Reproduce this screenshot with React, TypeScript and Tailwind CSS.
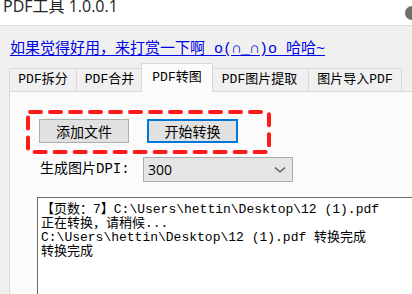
import React from "react";

const cjk = '"Noto Sans CJK SC", sans-serif';
const sim = '"Liberation Mono", "Noto Sans CJK SC", monospace';

function Tab({ label, w, selected }: { label: string; w: string; selected?: boolean }) {
  if (selected) {
    return (
      <div
        className={`${w} h-[29px] -mb-px -mx-[2px] relative z-10 bg-[#fbfbfb] border-t border-l border-r border-[#d9d9d9] flex items-start justify-center pt-[4px] text-[13px] text-black`}
        style={{ fontFamily: sim }}
      >
        {label}
      </div>
    );
  }
  return (
    <div
      className={`${w} h-[23px] bg-[#f0f0f0] border-t border-r border-[#d9d9d9] first:border-l flex items-center justify-center text-[13px] text-black`}
      style={{ fontFamily: sim }}
    >
      {label}
    </div>
  );
}

export default function App() {
  return (
    <div className="w-[412px] h-[294px] overflow-hidden bg-[#f0f0f0] relative">
      {/* title bar */}
      <div className="h-[26px] bg-white border-b border-[#dcdcdc] overflow-hidden relative">
        <div
          className="pl-[3px] -mt-[4px] text-[16px] leading-[20px] text-[#222]"
          style={{ fontFamily: '"Open Sans", "Noto Sans CJK SC", sans-serif' }}
        >
          PDF工具 1.0.0.1
        </div>
        <div className="absolute left-[405px] top-[6px] w-[14px] h-[14px] rounded-full bg-[#6e6e6e]" />
      </div>

      {/* link */}
      <div className="pl-[10px] pt-[9px] h-[36px]">
        <span
          className="text-[15px] leading-[18px] text-[#0000e6] underline underline-offset-2"
          style={{ fontFamily: '"Liberation Mono", "Noto Sans CJK SC", monospace' }}
        >
          如果觉得好用，来打赏一下啊 o(∩_∩)o 哈哈~
        </span>
      </div>

      {/* tabs */}
      <div className="flex items-end h-[29px] pl-[9px] relative">
        <Tab label="PDF拆分" w="w-[68px]" />
        <Tab label="PDF合并" w="w-[66px]" />
        <Tab label="PDF转图" w="w-[72px]" selected />
        <Tab label="PDF图片提取" w="w-[98px]" />
        <Tab label="图片导入PDF" w="w-[93px]" />
      </div>

      {/* panel */}
      <div className="ml-[9px] h-[220px] bg-[#fbfbfb] border-t border-l border-[#d9d9d9] relative">
        <div className="pl-[29px] pt-[27px] flex gap-[18px]">
          <div
            className="w-[90px] h-[24px] bg-[#e1e1e1] border border-[#adadad] flex items-center justify-center text-[14px] text-black"
            style={{ fontFamily: cjk }}
          >
            添加文件
          </div>
          <div
            className="w-[91px] h-[24px] bg-[#e1e1e1] border-2 border-[#0078d7] flex items-center justify-center text-[14px] text-black"
            style={{ fontFamily: cjk }}
          >
            开始转换
          </div>
        </div>

        <div className="pl-[30px] pt-[14px] flex items-center">
          <div className="w-[103px] text-[14px] text-black" style={{ fontFamily: sim }}>
            生成图片DPI:
          </div>
          <div className="w-[150px] h-[25px] bg-[#e5e5e5] border border-[#acacac] flex items-center justify-between pl-[4px] pr-[6px]">
            <span className="text-[14px] text-black" style={{ fontFamily: '"Open Sans", sans-serif' }}>
              300
            </span>
            <svg width="12" height="8" viewBox="0 0 12 8">
              <path d="M1 1.5 L6 6 L11 1.5" fill="none" stroke="#555" strokeWidth="1.3" />
            </svg>
          </div>
        </div>

        <div className="ml-[27px] mt-[15px] h-[120px] bg-white border-t border-l border-[#6d6d6d] pl-[3px] pt-[5px] text-[13px] leading-[14px] text-black whitespace-pre" style={{ fontFamily: sim }}>
          <div>【页数：7】C:\Users\hettin\Desktop\12 (1).pdf</div>
          <div>正在转换，请稍候...</div>
          <div>C:\Users\hettin\Desktop\12 (1).pdf 转换完成</div>
          <div>转换完成</div>
        </div>

        {/* red dashed annotation */}
        <svg className="absolute left-[16px] top-[18px]" width="245" height="44" viewBox="0 0 245 44">
          <rect x="2" y="2" width="241" height="40" rx="2" fill="none" stroke="#ff1a1a" strokeWidth="4" strokeDasharray="11 9" strokeLinecap="round" />
        </svg>
      </div>
    </div>
  );
}
